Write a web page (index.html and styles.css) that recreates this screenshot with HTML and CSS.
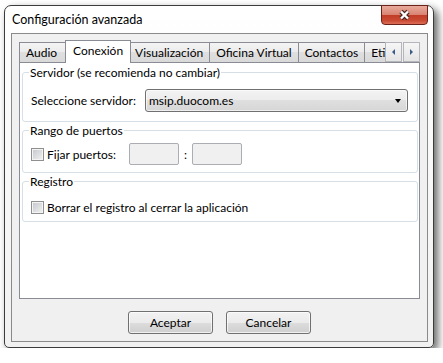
FILE: index.html
```html
<!DOCTYPE html>
<html>
<head lang="es">
    <meta charset="UTF-8">
    <title>Configuración avanzada</title>
    <link rel="stylesheet" href="styles.css">
</head>
<body>
<div class="window">
    <div class="titlebar">
        <span class="title">Configuración avanzada</span>
        <div class="close">
            <svg width="15" height="12" viewBox="0 0 15 12">
                <path d="M4 2.5 L11 9.5 M11 2.5 L4 9.5" stroke="#4a2a24" stroke-width="4.6" fill="none"/>
                <path d="M4 2.5 L11 9.5 M11 2.5 L4 9.5" stroke="#fff" stroke-width="2.4" fill="none"/>
            </svg>
        </div>
    </div>
    <div class="client">
        <div class="tabs">
            <div class="tabstrip">
                <div class="tab first">Audio</div>
                <div class="tab active">Conexión</div>
                <div class="tab">Visualización</div>
                <div class="tab">Oficina Virtual</div>
                <div class="tab">Contactos</div>
                <div class="tab">Etiquetas</div>
            </div>
            <div class="scroller">
                <div class="scroll-btn"><span class="tri-left"></span></div>
                <div class="scroll-btn"><span class="tri-right"></span></div>
            </div>
        </div>
        <div class="panel">
            <fieldset class="group">
                <legend>Servidor (se recomienda no cambiar)</legend>
                <div class="row row-server">
                    <span class="label">Seleccione servidor:</span>
                    <div class="combo">
                        <span>msip.duocom.es</span>
                        <span class="drop"></span>
                    </div>
                </div>
            </fieldset>
            <fieldset class="group">
                <legend>Rango de puertos</legend>
                <div class="row row-ports">
                    <div class="fix"><span class="check"></span><span>Fijar puertos:</span></div>
                    <div class="port"></div>
                    <span class="colon">:</span>
                    <div class="port"></div>
                </div>
            </fieldset>
            <fieldset class="group">
                <legend>Registro</legend>
                <div class="row row-log">
                    <span class="check"></span><span>Borrar el registro al cerrar la aplicación</span>
                </div>
            </fieldset>
        </div>
        <div class="buttons">
            <div class="btn">Aceptar</div>
            <div class="btn">Cancelar</div>
        </div>
    </div>
</div>
</body>
</html>
```

FILE: styles.css
```css
*{
    margin: 0;
    padding: 0;
}
body{
    background: #fff;
    font-family: Lato, "Liberation Sans", sans-serif;
    font-size: 12px;
    color: #000;
}
.window{
    box-sizing: border-box;
    width: 430px;
    height: 343px;
    margin: 5px 0 0 4px;
    padding: 0 5px 5px 6px;
    border: 1px solid #3c3c3c;
    border-radius: 7px 7px 5px 5px;
    background: linear-gradient(#ffffff, #f1f1f1);
    box-shadow: 4px 4px 8px rgba(0,0,0,0.6);
    display: flex;
    flex-direction: column;
}
.titlebar{
    height: 27px;
    flex-shrink: 0;
    display: flex;
    justify-content: space-between;
    align-items: flex-start;
}
.title{
    font-size: 12.5px;
    line-height: 15px;
    padding: 6px 0 0 1px;
}
.close{
    box-sizing: border-box;
    width: 47px;
    height: 20px;
    margin-top: -1px;
    border: 1px solid #6d2219;
    border-radius: 0 0 4px 4px;
    background: linear-gradient(#e9ab9c 0%, #d98473 48%, #c23d28 52%, #c94a33 80%, #dd6d56 100%);
    display: flex;
    align-items: center;
    justify-content: center;
}
.client{
    flex: 1;
    border: 1px solid #8a8a8a;
    background: #f0f0f0;
    padding: 6px 7px 5px 7px;
    display: flex;
    flex-direction: column;
}

/* pestañas */
.tabs{
    height: 22px;
    display: flex;
    position: relative;
    z-index: 1;
}
.tabstrip{
    flex: 1;
    display: flex;
    align-items: flex-end;
    overflow: hidden;
    padding-bottom: 1px;
    margin-bottom: -1px;
}
.tab{
    box-sizing: border-box;
    flex-shrink: 0;
    height: 20px;
    padding: 2px 6px 0;
    margin-left: -1px;
    border: 1px solid #898c95;
    border-bottom: none;
    background: linear-gradient(#f4f4f4, #ebebeb 50%, #dfdfdf 50%, #d9d9d9);
    line-height: 15px;
    white-space: nowrap;
}
.tab.first{
    margin-left: 0;
    padding-right: 8px;
}
.tab.active{
    height: 23px;
    margin: 0 -2px -1px -1px;
    padding: 2px 7px 0;
    background: #fff;
    position: relative;
    z-index: 1;
}
.scroller{
    display: flex;
    gap: 1px;
    align-self: flex-end;
    height: 20px;
}
.scroll-btn{
    box-sizing: border-box;
    width: 17px;
    height: 20px;
    border: 1px solid #b4b6bb;
    background: linear-gradient(#f6f6f6, #e4e4e4);
    display: flex;
    align-items: center;
    justify-content: center;
}
.tri-left{
    border-top: 3px solid transparent;
    border-bottom: 3px solid transparent;
    border-right: 3px solid #3d5a87;
}
.tri-right{
    border-top: 3px solid transparent;
    border-bottom: 3px solid transparent;
    border-left: 3px solid #3d5a87;
}

/* panel */
.panel{
    box-sizing: border-box;
    height: 237px;
    border: 1px solid #898c95;
    background: #fff;
    padding: 2px 1px 0 2px;
}
.group{
    padding: 0 6px;
    border: 1px solid #d5dfe5;
    border-radius: 3px;
    min-width: 0;
}
.group + .group{
    margin-top: 1px;
}
.group legend{
    padding: 0 1px;
    line-height: 15px;
}
.row{
    display: flex;
    align-items: center;
    padding-left: 2px;
    line-height: 15px;
}
.row-server{
    height: 23px;
    margin: 9px 0 9px;
}
.row-ports{
    height: 22px;
    margin: 5px 0 7px;
}
.row-log{
    height: 13px;
    margin: 12px 0 7px;
}
.label{
    width: 114px;
}
.combo{
    box-sizing: border-box;
    width: 263px;
    height: 23px;
    padding: 0 6px 0 3px;
    border: 1px solid #707070;
    border-radius: 3px;
    background: linear-gradient(#f3f3f3, #ececec 50%, #dfdfdf 50%, #d6d6d6);
    box-shadow: inset 0 0 0 1px rgba(255,255,255,0.6);
    display: flex;
    align-items: center;
}
.drop{
    margin-left: auto;
    border-left: 3.5px solid transparent;
    border-right: 3.5px solid transparent;
    border-top: 4px solid #000;
}
.fix{
    width: 98px;
    display: flex;
    align-items: center;
}
.check{
    box-sizing: border-box;
    flex-shrink: 0;
    width: 13px;
    height: 13px;
    margin-right: 3px;
    border: 1px solid #8f8f8f;
    background: linear-gradient(135deg, #c3c6cb, #f2f2f2);
    box-shadow: inset 0 0 0 1px #f4f4f4;
}
.port{
    box-sizing: border-box;
    width: 50px;
    height: 22px;
    border: 1px solid #abadb3;
    border-radius: 2px;
    background: #f0f0f0;
}
.colon{
    width: 13px;
    text-align: center;
}

/* botones */
.buttons{
    display: flex;
    justify-content: center;
    gap: 13px;
    margin-top: 12px;
}
.btn{
    box-sizing: border-box;
    width: 85px;
    height: 23px;
    border: 1px solid #707070;
    border-radius: 3px;
    background: linear-gradient(#f2f2f2, #ebebeb 50%, #dddddd 50%, #cfcfcf);
    box-shadow: inset 0 0 0 1px rgba(255,255,255,0.7);
    line-height: 21px;
    text-align: center;
}
```
